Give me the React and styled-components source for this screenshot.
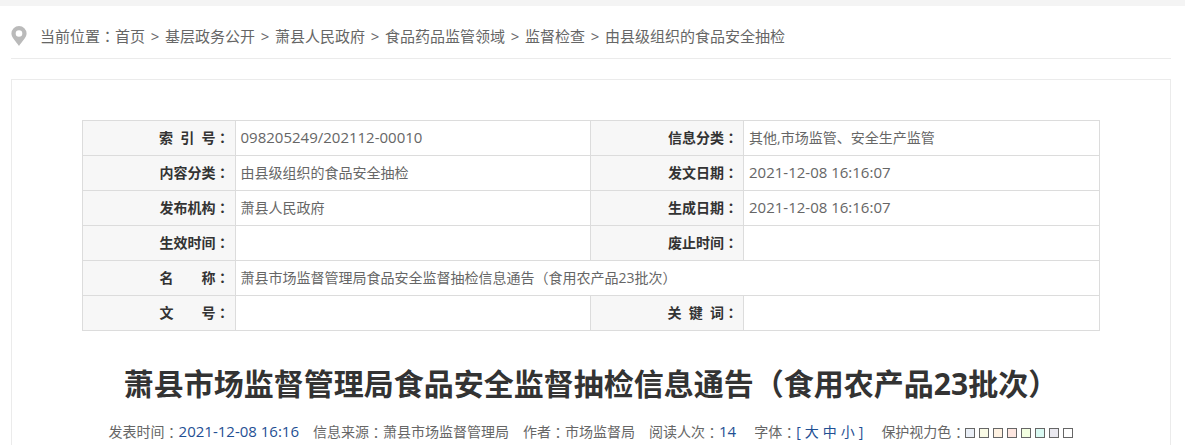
import React from "react";
import styled, { createGlobalStyle } from "styled-components";

const GlobalStyle = createGlobalStyle`
  *, *::before, *::after { box-sizing: border-box; }
  body {
    margin: 0;
    background: #fff;
    color: #666;
    font-family: "Open Sans", "Noto Sans CJK SC", sans-serif;
    font-size: 14px;
  }
  a { color: inherit; text-decoration: none; }
`;

const Page = styled.div`
  display: flex;
  flex-direction: column;
  min-height: 100vh;
  padding: 0 14px 0 11px;
  border-top: 6px solid #f4f4f4;
`;

const Breadcrumb = styled.nav`
  display: flex;
  align-items: center;
  height: 53px;
  padding-top: 8px;
  border-bottom: 1px solid #ebebeb;
  font-size: 15px;
  line-height: 20px;
  white-space: nowrap;
`;

const Pin = styled.svg`
  width: 16px;
  height: 20px;
  margin-right: 13px;
`;

const Trail = styled.ol`
  display: flex;
  margin: 0;
  padding: 0;
  list-style: none;
`;

const Crumb = styled.li`
  display: flex;

  & + &::before {
    content: ">";
    width: 20px;
    text-align: center;
  }
`;

/* The Traditional Chinese face sets the full-width colon in the middle of its box. */
const Colon = styled.span.attrs({ children: "：" })`
  font-family: "Noto Sans CJK TC", sans-serif;
`;

const Panel = styled.main`
  flex: 1;
  margin-top: 20px;
  padding: 40px 70px 0;
  border: 1px solid #ebebeb;
  border-bottom: 0;
`;

const InfoTable = styled.table`
  width: 100%;
  table-layout: fixed;
  border-collapse: collapse;
  line-height: 20px;
`;

const LabelColumn = styled.col`
  width: 15%;
`;

const ValueColumn = styled.col`
  width: 35%;
`;

const Label = styled.th`
  height: 35px;
  padding: 0 5px 1px;
  border: 1px solid #dcdcdc;
  background: #f7f7f7;
  color: #333;
  text-align: right;
`;

const Value = styled.td`
  padding: ${(p) => (p.$numeric ? "0 5px 2px" : "0 5px")};
  border: 1px solid #dcdcdc;
  font-size: ${(p) => (p.$numeric ? "15px" : "14px")};
`;

const Title = styled.h1`
  margin: 32px 0 0;
  color: #333;
  font-size: 30px;
  line-height: 42px;
  text-align: center;
`;

const Meta = styled.div`
  display: flex;
  justify-content: center;
  gap: 14px;
  margin-top: 17px;
  line-height: 20px;
  white-space: nowrap;
`;

const Group = styled.div`
  display: flex;
  align-items: center;
  margin-left: ${(p) => (p.$spaced ? "4px" : "0")};
`;

const Accent = styled.span`
  padding-bottom: 1px;
  color: #1f4f93;
  font-size: 15px;
  line-height: 19px;
`;

const Sizes = styled.span`
  display: flex;
  gap: 4px;
  color: #1f4f93;
`;

const SizeButton = styled.button`
  padding: 0;
  border: 0;
  background: none;
  color: inherit;
  font: inherit;
  line-height: 20px;
  cursor: pointer;
`;

const Swatches = styled.span`
  display: flex;
  gap: 4px;
  padding-top: 2px;
`;

const Swatch = styled.button`
  width: 10px;
  height: 10px;
  padding: 0;
  border: 1px solid #666;
  background: ${(p) => p.$color};
  cursor: pointer;
`;

const crumbs = ["首页", "基层政务公开", "萧县人民政府", "食品药品监管领域", "监督检查", "由县级组织的食品安全抽检"];

const rows = [
  [["索\u00a0\u00a0引\u00a0\u00a0号", "098205249/202112-00010", true], ["信息分类", "其他,市场监管、安全生产监管"]],
  [["内容分类", "由县级组织的食品安全抽检"], ["发文日期", "2021-12-08 16:16:07", true]],
  [["发布机构", "萧县人民政府"], ["生成日期", "2021-12-08 16:16:07", true]],
  [["生效时间", ""], ["废止时间", ""]],
  [["名\u3000\u3000称", "萧县市场监督管理局食品安全监督抽检信息通告（食用农产品23批次）"]],
  [["文\u3000\u3000号", ""], ["关\u00a0\u00a0键\u00a0\u00a0词", ""]],
];

const eyeColors = ["#eaeff7", "#fafbe6", "#fff2e2", "#fde6e0", "#f3ffe1", "#dafaf3", "#eae9f0", "#ffffff"];

export default function App() {
  return (
    <>
      <GlobalStyle />
      <Page>
        <Breadcrumb aria-label="当前位置">
          <Pin viewBox="0 0 16 20" aria-hidden="true">
            <path
              fill="#bababa"
              fillRule="evenodd"
              d="M8 0a7.6 7.6 0 0 0-7.6 7.6C.4 11.6 5 15.5 8 20c3-4.5 7.6-8.4 7.6-12.4A7.6 7.6 0 0 0 8 0zm0 4.200a3.300 3.300 0 1 1 0 6.600 3.300 3.300 0 0 1 0-6.600z"
            />
          </Pin>
          <span>当前位置<Colon /></span>
          <Trail>
            {crumbs.map((name) => (
              <Crumb key={name}><a href="#">{name}</a></Crumb>
            ))}
          </Trail>
        </Breadcrumb>
        <Panel>
          <InfoTable>
            <colgroup>
              <LabelColumn />
              <ValueColumn />
              <LabelColumn />
              <ValueColumn />
            </colgroup>
            <tbody>
              {rows.map((cells) => (
                <tr key={cells[0][0]}>
                  {cells.map(([label, value, numeric]) => (
                    <React.Fragment key={label}>
                      <Label scope="row">{label}<Colon /></Label>
                      <Value colSpan={cells.length === 1 ? 3 : 1} $numeric={numeric}>{value}</Value>
                    </React.Fragment>
                  ))}
                </tr>
              ))}
            </tbody>
          </InfoTable>
          <Title>萧县市场监督管理局食品安全监督抽检信息通告（食用农产品23批次）</Title>
          <Meta>
            <Group>发表时间<Colon /><Accent>2021-12-08 16:16</Accent></Group>
            <Group>信息来源<Colon />萧县市场监督管理局</Group>
            <Group>作者<Colon />市场监督局</Group>
            <Group>阅读人次<Colon /><Accent>14</Accent></Group>
            <Group $spaced>
              字体<Colon />
              <Sizes>
                [
                <SizeButton type="button">大</SizeButton>
                <SizeButton type="button">中</SizeButton>
                <SizeButton type="button">小</SizeButton>
                ]
              </Sizes>
            </Group>
            <Group $spaced>
              保护视力色<Colon />
              <Swatches>
                {eyeColors.map((color) => (
                  <Swatch key={color} type="button" $color={color} aria-label={color} />
                ))}
              </Swatches>
            </Group>
          </Meta>
        </Panel>
      </Page>
    </>
  );
}
